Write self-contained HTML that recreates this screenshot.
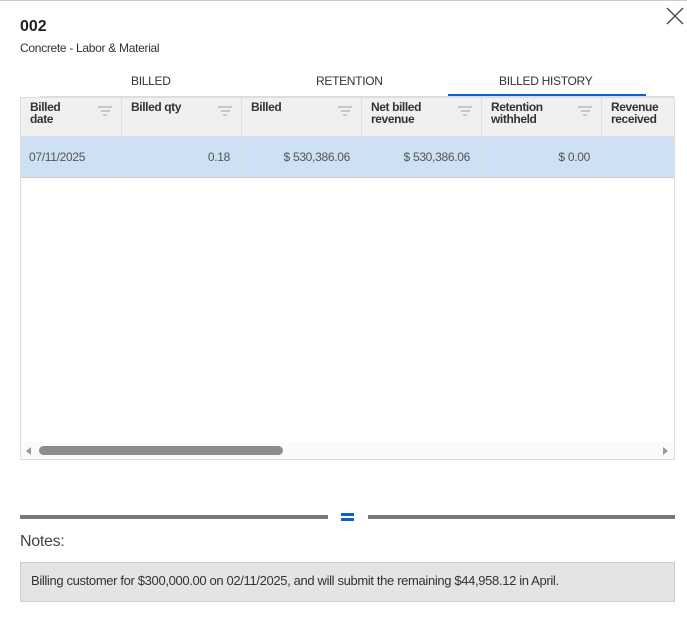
<!DOCTYPE html>
<html><head><style>
*{margin:0;padding:0;box-sizing:border-box}
body{width:687px;height:632px;background:#fff;font-family:"Liberation Sans",sans-serif;color:#333;position:relative;overflow:hidden}
.a{position:absolute}
.t{font-size:12px;letter-spacing:-0.3px}
.h{font-size:12px;font-weight:bold;line-height:12px;letter-spacing:-0.4px;color:#333}
.col{position:absolute;top:0;height:80px;border-right:1px solid #ddd}
.f{position:absolute;top:8px;width:14px}
.f i{display:block;height:1.5px;background:#c8c8c8;margin:0 auto 2.5px}
</style></head><body>
<div class="a" style="left:0;top:0;width:687px;height:1px;background:#ccc"></div>
<div class="a" style="left:20px;top:18px;font-size:16px;font-weight:bold;color:#222">002</div>
<div class="a t" style="left:20px;top:41px;color:#333">Concrete - Labor &amp; Material</div>
<svg class="a" style="left:666px;top:7px" width="18" height="18"><path d="M1 1L17 17M17 1L1 17" stroke="#444" stroke-width="1.3"/></svg>
<div class="a t" style="left:131px;top:74px">BILLED</div>
<div class="a t" style="left:316px;top:74px">RETENTION</div>
<div class="a t" style="left:499px;top:74px">BILLED HISTORY</div>
<div class="a" style="left:40px;top:96px;width:634px;height:1px;background:#ddd"></div>
<div class="a" style="left:448px;top:94px;width:198px;height:2px;background:#0a64c8"></div>
<div class="a" style="left:20px;top:97px;width:655px;height:363px;border:1px solid #ddd;overflow:hidden">
 <div class="a" style="left:0;top:0;width:655px;height:39px;background:#f0f0f0;border-bottom:1px solid #ddd"></div>
 <div class="a" style="left:0;top:39px;width:655px;height:41px;background:#cde0f4;border-bottom:1px solid #ccc"></div>
 <div class="col" style="left:0;width:101px"></div>
 <div class="col" style="left:101px;width:120px"></div>
 <div class="col" style="left:221px;width:120px"></div>
 <div class="col" style="left:341px;width:120px"></div>
 <div class="col" style="left:461px;width:120px"></div>
 <div class="a h" style="left:9px;top:3px">Billed<br>date</div>
 <div class="a h" style="left:110px;top:3px">Billed qty</div>
 <div class="a h" style="left:230px;top:3px">Billed</div>
 <div class="a h" style="left:350px;top:3px">Net billed<br>revenue</div>
 <div class="a h" style="left:470px;top:3px">Retention<br>withheld</div>
 <div class="a h" style="left:590px;top:3px">Revenue<br>received</div>
 <div class="f" style="left:77px"><i style="width:14px"></i><i style="width:9px"></i><i style="width:4px"></i></div>
 <div class="f" style="left:197px"><i style="width:14px"></i><i style="width:9px"></i><i style="width:4px"></i></div>
 <div class="f" style="left:317px"><i style="width:14px"></i><i style="width:9px"></i><i style="width:4px"></i></div>
 <div class="f" style="left:437px"><i style="width:14px"></i><i style="width:9px"></i><i style="width:4px"></i></div>
 <div class="f" style="left:557px"><i style="width:14px"></i><i style="width:9px"></i><i style="width:4px"></i></div>
 <div class="a t" style="left:8px;top:52px;color:#555">07/11/2025</div>
 <div class="a t" style="left:101px;width:108px;text-align:right;top:52px;color:#555">0.18</div>
 <div class="a t" style="left:221px;width:108px;text-align:right;top:52px;color:#555">$ 530,386.06</div>
 <div class="a t" style="left:341px;width:108px;text-align:right;top:52px;color:#555">$ 530,386.06</div>
 <div class="a t" style="left:461px;width:108px;text-align:right;top:52px;color:#555">$ 0.00</div>
 <div class="a" style="left:0;top:344px;width:655px;height:17px;background:#fafafa"></div>
 <div class="a" style="left:5px;top:349px;width:0;height:0;border-top:4px solid transparent;border-bottom:4px solid transparent;border-right:5px solid #999"></div>
 <div class="a" style="left:642px;top:349px;width:0;height:0;border-top:4px solid transparent;border-bottom:4px solid transparent;border-left:5px solid #999"></div>
 <div class="a" style="left:18px;top:348px;width:244px;height:9px;border-radius:5px;background:#8c8c8c"></div>
</div>
<div class="a" style="left:20px;top:515px;width:308px;height:4px;background:#777"></div>
<div class="a" style="left:368px;top:515px;width:307px;height:4px;background:#777"></div>
<div class="a" style="left:341px;top:513px;width:13px;height:3px;background:#0a64c8"></div>
<div class="a" style="left:341px;top:518px;width:13px;height:3px;background:#0a64c8"></div>
<div class="a" style="left:20px;top:533px;font-size:16px;color:#444;letter-spacing:-0.3px">Notes:</div>
<div class="a" style="left:20px;top:562px;width:655px;height:40px;background:#e4e4e4;border:1px solid #ccc;padding:10px 10px;color:#333;font-size:13px;letter-spacing:-0.35px">Billing customer for $300,000.00 on 02/11/2025, and will submit the remaining $44,958.12 in April.</div>
</body></html>
